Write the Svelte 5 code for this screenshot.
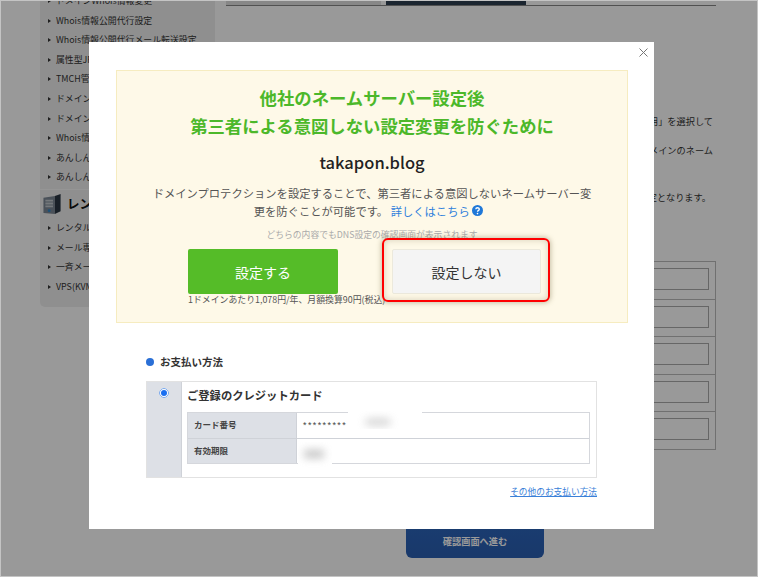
<script>
  const sideTop = [
    'ドメインWhois情報変更',
    'Whois情報公開代行設定',
    'Whois情報公開代行メール転送設定',
    '属性型JPドメイン情報変更',
    'TMCH管理',
    'ドメイン移管ロック',
    'ドメイン自動更新',
    'Whois情報確認',
    'あんしんドメイン',
    'あんしんWhois'
  ];
  const sideRental = ['レンタルサーバー', 'メール専用サーバー', '一斉メール配信', 'VPS(KVM)'];
  const fieldRows = [1, 2, 3, 4, 5];
</script>

<div class="page">
  <aside class="side">
    <ul>
      {#each sideTop as item}
        <li>{item}</li>
      {/each}
    </ul>
    <div class="side-head">
      <svg class="server" width="19" height="20" viewBox="0 0 19 21">
        <path d="M0 4 L12 2 V21 L0 20 Z" fill="#7c8894" />
        <path d="M12 2 L18 0 V18 L12 21 Z" fill="#2a3644" />
        <path d="M2 6 H10 V8 H2 Z M2 9 H10 V11 H2 Z M2 12 H10 V14 H2 Z" fill="#c2c8ce" />
        <circle cx="6" cy="17.5" r="1.5" fill="#2f86c8" />
      </svg>
      <span>レンタルサーバー</span>
    </div>
    <ul>
      {#each sideRental as item}
        <li>{item}</li>
      {/each}
    </ul>
  </aside>

  <main class="content">
    <div class="tabs"><span class="tab-off"></span><span class="tab-on"></span></div>
    <p class="line first">ネームサーバーの設定画面で「他社のネームサーバーを利用」を選択して</p>
    <p class="line second">ください。入力欄には利用するサービスが指定するドメインのネーム</p>
    <p class="line third">サーバーを入力してください。反映には時間を要する予定となります。</p>
    <div class="fields">
      {#each fieldRows as row (row)}
        <div class="field-row"><div class="field"></div></div>
      {/each}
    </div>
    <button class="next">確認画面へ進む</button>
  </main>

  <div class="overlay"></div>

  <div class="modal">
    <button class="close" aria-label="閉じる">
      <svg width="9" height="9" viewBox="0 0 9 9">
        <path d="M0.5 0.5 L8.5 8.5 M8.5 0.5 L0.5 8.5" stroke="#777" stroke-width="1" fill="none" />
      </svg>
    </button>

    <section class="notice">
      <h2>他社のネームサーバー設定後<br />第三者による意図しない設定変更を防ぐために</h2>
      <div class="domain">takapon.blog</div>
      <p class="desc">
        ドメインプロテクションを設定することで、第三者による意図しないネームサーバー変<br />更を防ぐことが可能です。
        <a href="#more">詳しくはこちら</a>
        <svg class="help" width="11" height="11" viewBox="0 0 11 11">
          <circle cx="5.5" cy="5.5" r="5.5" fill="#1f78d8" />
          <path d="M3.8 4.3 C3.8 2.2 7.3 2.3 7.3 4.2 C7.3 5.4 5.5 5.4 5.5 6.8" stroke="#fff" stroke-width="1.3" fill="none" />
          <circle cx="5.5" cy="8.6" r="0.8" fill="#fff" />
        </svg>
      </p>
      <p class="hint">どちらの内容でもDNS設定の確認画面が表示されます</p>
      <div class="actions">
        <div class="yes-col">
          <button class="btn yes">設定する</button>
          <div class="price">1ドメインあたり1,078円/年、月額換算90円(税込)</div>
        </div>
        <div class="no-col">
          <button class="btn no">設定しない</button>
          <div class="ring"></div>
        </div>
      </div>
    </section>

    <section class="pay">
      <h3>お支払い方法</h3>
      <div class="pay-box">
        <div class="pay-radio"><span class="radio"></span></div>
        <div class="pay-main">
          <div class="pay-title">ご登録のクレジットカード</div>
          <div class="card-table">
            <div class="card-row">
              <div class="th">カード番号</div>
              <div class="td"><span class="stars">*********</span><span class="mask mask-num"><i></i></span></div>
            </div>
            <div class="card-row">
              <div class="th">有効期限</div>
              <div class="td"><span class="mask mask-exp"><i></i></span></div>
            </div>
          </div>
        </div>
      </div>
      <div class="other"><a href="#other">その他のお支払い方法</a></div>
    </section>
  </div>
</div>

<style>
  :global(body) {
    margin: 0;
    background: #fff;
    font-family: "Noto Sans CJK JP", "Noto Sans", sans-serif;
  }

  .page {
    position: relative;
    width: 758px;
    height: 577px;
    overflow: hidden;
    display: flex;
    align-items: flex-start;
    background: #fff;
    color: #333;
    box-sizing: border-box;
  }

  .overlay {
    position: absolute;
    inset: 0;
    background: rgba(0, 0, 0, 0.4);
    border: 1px solid #c4c4c4;
    box-sizing: border-box;
  }

  .side {
    width: 175px;
    height: 316px;
    margin: -9px 0 0 40px;
    background: #efefef;
    border-radius: 0 0 5px 5px;
    flex: none;
    font-size: 8.9px;
  }

  .side ul {
    list-style: none;
    margin: 0;
    padding: 0;
  }

  .side li {
    height: 19.6px;
    line-height: 19.6px;
    padding-left: 16px;
    white-space: nowrap;
    position: relative;
    overflow: hidden;
  }

  .side li::before {
    content: '';
    position: absolute;
    left: 8px;
    top: 8px;
    border-left: 3px solid #333;
    border-top: 2px solid transparent;
    border-bottom: 2px solid transparent;
  }

  .side-head {
    display: flex;
    align-items: center;
    gap: 5px;
    height: 29px;
    margin-top: 2px;
    padding-left: 3px;
    box-sizing: border-box;
    border-top: 1px solid #f8f8f8;
    font-size: 12.5px;
    font-weight: 700;
    color: #111;
    white-space: nowrap;
  }

  .server {
    flex: none;
  }

  .content {
    width: 490px;
    margin-left: 11px;
    flex: none;
    font-size: 9.2px;
  }

  .tabs {
    height: 4px;
    margin-top: 1px;
    border-bottom: 1px solid #888;
    display: flex;
    gap: 5px;
  }

  .tab-off {
    width: 155px;
    height: 4px;
    background: #e2e2e2;
  }

  .tab-on {
    width: 140px;
    height: 4px;
    background: #2e3f50;
  }

  .line {
    margin: 0;
    text-align: right;
    white-space: nowrap;
    padding-right: 3px;
    line-height: 14px;
  }

  .first {
    margin-top: 108px;
  }

  .second {
    margin-top: 15px;
  }

  .third {
    margin-top: 33px;
    padding-right: 5px;
  }

  .fields {
    margin-top: 57px;
    border: 1px solid #bbb;
    box-sizing: border-box;
    height: 189px;
  }

  .field-row {
    height: 37.5px;
    box-sizing: border-box;
    padding: 6px 6px 0 40px;
    border-bottom: 1px solid #bbb;
  }

  .field-row:last-child {
    border-bottom: 0;
  }

  .field {
    height: 22px;
    border: 1px solid #aaa;
    box-sizing: border-box;
  }

  .next {
    display: block;
    width: 138px;
    height: 40px;
    margin: 68px 0 0 180px;
    padding: 5px 0 0;
    border: 0;
    border-radius: 6px;
    background: linear-gradient(#2c66bd, #2a5fb2);
    color: #fff;
    font: 700 9.2px "Noto Sans CJK JP", sans-serif;
  }

  .modal {
    position: absolute;
    left: 89px;
    top: 42px;
    width: 565px;
    height: 487px;
    box-sizing: border-box;
    padding: 28px 26px 0 27px;
    background: #fff;
  }

  .close {
    position: absolute;
    top: 6px;
    right: 6px;
    padding: 0;
    border: 0;
    background: none;
    display: flex;
  }

  .notice {
    height: 253px;
    box-sizing: border-box;
    padding-top: 13px;
    background: #fef9e8;
    border: 1px solid #f6ecc0;
    text-align: center;
  }

  h2 {
    margin: 0;
    color: #4cb82a;
    font-size: 17.35px;
    line-height: 28px;
    font-weight: 700;
  }

  .domain {
    margin-top: 10px;
    font-size: 16.5px;
    line-height: 24px;
    font-weight: 500;
    color: #222;
  }

  .desc {
    margin: 10px 0 0;
    font-size: 11.3px;
    line-height: 18px;
    color: #555;
  }

  .desc a {
    color: #2f80dc;
    text-decoration: none;
  }

  .help {
    vertical-align: 0;
    margin-right: 7px;
  }

  .hint {
    margin: 8px 0 0;
    font-size: 8.8px;
    line-height: 14px;
    color: #aaa;
  }

  .actions {
    display: flex;
    gap: 54px;
    margin-top: 7px;
    padding-left: 71px;
    text-align: left;
  }

  .yes-col,
  .no-col {
    width: 150px;
    flex: none;
  }

  .no-col {
    position: relative;
    width: 149px;
  }

  .btn {
    display: block;
    width: 100%;
    height: 45px;
    border-radius: 2px;
    font: 14px "Noto Sans CJK JP", sans-serif;
    padding: 0;
  }

  .yes {
    border: 0;
    background: #55bc28;
    color: #fff;
  }

  .no {
    border: 1px solid #ece9dc;
    background: #f4f4f4;
    color: #333;
  }

  .ring {
    position: absolute;
    left: -10px;
    top: -11px;
    width: 168px;
    height: 64px;
    box-sizing: border-box;
    border: 2px solid #f00;
    border-radius: 6px;
    box-shadow: 0 0 5px 1px rgba(120, 110, 70, 0.4), inset 0 0 6px rgba(120, 110, 70, 0.3);
  }

  .price {
    white-space: nowrap;
    font-size: 8.9px;
    line-height: 12px;
    color: #555;
  }

  .pay {
    padding: 0 31px 0 30px;
  }

  h3 {
    position: relative;
    margin: 30px 0 0;
    padding-left: 14px;
    font-size: 10.5px;
    line-height: 18px;
    font-weight: 700;
    color: #333;
  }

  h3::before {
    content: '';
    position: absolute;
    left: 0;
    top: 5px;
    width: 8px;
    height: 8px;
    border-radius: 50%;
    background: #2a6fd6;
  }

  .pay-box {
    display: flex;
    height: 97px;
    margin-top: 10px;
    box-sizing: border-box;
    border: 1px solid #e2e2e2;
  }

  .pay-radio {
    width: 35px;
    flex: none;
    background: #dde0e6;
    border-right: 1px solid #cfd2d8;
    display: flex;
    justify-content: center;
    padding-top: 6px;
    box-sizing: border-box;
  }

  .radio {
    width: 10px;
    height: 10px;
    box-sizing: border-box;
    border-radius: 50%;
    background: #1a6ff0;
    border: 2px solid #fff;
    outline: 1px solid #7aa8ea;
    outline-offset: -1px;
  }

  .pay-main {
    flex: 1;
    padding: 0 6px 0 5px;
  }

  .pay-title {
    height: 30px;
    line-height: 26px;
    font-size: 11.3px;
    font-weight: 700;
    color: #333;
  }

  .card-table {
    border: 1px solid #d5d7dc;
  }

  .card-row {
    display: flex;
    height: 25px;
    box-sizing: border-box;
    font-size: 8.5px;
    line-height: 23px;
  }

  .card-row + .card-row {
    border-top: 1px solid #cfd2d8;
  }

  .th {
    width: 109px;
    flex: none;
    padding-left: 6px;
    box-sizing: border-box;
    background: #dde0e6;
    border-right: 1px solid #cfd2d8;
    font-weight: 700;
    color: #444;
  }

  .td {
    position: relative;
    flex: 1;
    padding-left: 6px;
    color: #444;
  }

  .stars {
    font-family: "Liberation Sans", sans-serif;
    font-size: 9px;
    letter-spacing: 1.4px;
  }

  .mask {
    position: absolute;
    background: #fff;
    overflow: hidden;
  }

  .mask i {
    position: absolute;
    background: #aaa;
    filter: blur(4px);
  }

  .mask-num {
    left: 51px;
    top: -2px;
    width: 74px;
    height: 18px;
  }

  .mask-num i {
    left: 18px;
    top: 8px;
    width: 24px;
    height: 6px;
    opacity: 0.6;
  }

  .mask-exp {
    left: 1px;
    top: 3px;
    width: 34px;
    height: 26px;
  }

  .mask-exp i {
    left: 6px;
    top: 8px;
    width: 20px;
    height: 8px;
    opacity: 0.7;
  }

  .other {
    margin-top: 7px;
    text-align: right;
    font-size: 8.7px;
    line-height: 14px;
  }

  .other a {
    color: #3a80d8;
  }
</style>
